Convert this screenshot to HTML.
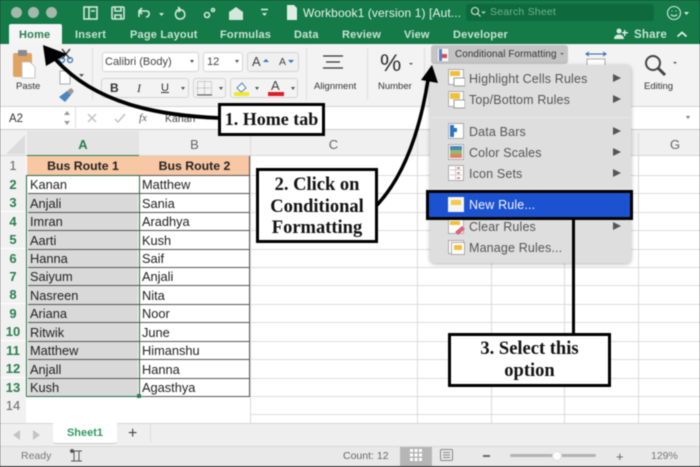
<!DOCTYPE html>
<html><head><meta charset="utf-8">
<style>
html,body{margin:0;padding:0;width:700px;height:467px;overflow:hidden;background:#222}
#p{position:absolute;left:0;top:0;width:700px;height:467px;overflow:hidden;background:#fff;font-family:"Liberation Sans",sans-serif;filter:blur(.45px)}
#p div{position:absolute;white-space:nowrap}
.tab{top:26px;height:18px;line-height:18px;font-size:11px;font-weight:bold;color:#c9e3d3;letter-spacing:.2px}
.rh{left:0;width:26px;height:18px;line-height:19px;text-align:center;font-size:13px;font-weight:bold;color:#2a7d4f;background:#f1f1f1}
.cell{height:18px;line-height:20px;color:#222;font-family:"Liberation Sans",sans-serif;font-size:12.8px}
.gh{left:250px;width:450px;height:1px;background:#dcdcdc}
.gv{top:133px;width:1px;height:290px;background:#d9d9d9}
.box{box-sizing:border-box;border:3px solid #000;background:#fff;text-align:center;font-family:"Liberation Serif",serif;font-weight:bold;font-size:18.500px;color:#111;line-height:22px}
.mi{left:469px;font-size:12.5px;color:#555;height:16px;line-height:16px;letter-spacing:.15px}
.ar{left:613px;width:0;height:0;border-left:8px solid #555;border-top:4.5px solid transparent;border-bottom:4.5px solid transparent}
.rb{font-size:9.5px;color:#333}
.btn{background:#fff;border:1px solid #d5d5d5;border-radius:3px;box-sizing:border-box}
</style></head><body><div id="p">

<!-- title bar -->
<div style="left:0;top:0;width:700px;height:44px;background:#137a48"></div>
<div style="left:11px;top:7px;width:11px;height:11px;border-radius:50%;background:#a4b8ac"></div>
<div style="left:28px;top:7px;width:11px;height:11px;border-radius:50%;background:#a4b8ac"></div>
<div style="left:46px;top:7px;width:11px;height:11px;border-radius:50%;background:#a4b8ac"></div>
<svg style="position:absolute;left:80px;top:3px" width="190" height="20" fill="none" stroke="#d3e8da" stroke-width="1.6">
<rect x="4" y="4" width="13" height="12"/><path d="M9 4v12M11 8h4"/>
<rect x="32" y="4" width="12" height="12" rx="1"/><path d="M35 4v4h6V4M35 16v-4h6v4"/>
<path d="M59 14v-6h8M59 8l3-3M59 8l3 3M67 8c3 0 3 6-1 6"/><path d="M79 10h5l-2.500 3z" fill="#d3e8da" stroke="none"/>
<path d="M100 6c-6 1-6 10 0 10s6-7 2-9M98 4l3 3-3 2"/>
<circle cx="127" cy="12" r="2.500"/><circle cx="133" cy="7" r="1.500"/>
<path d="M149 9l7-5 7 5v8h-14z" fill="#d3e8da" stroke="none"/>
<path d="M182 10h5l-2.500 3z" fill="#d3e8da" stroke="none" />
<path d="M181 6.500h7" />
</svg>
<svg style="position:absolute;left:286px;top:5px" width="12" height="15"><path d="M1 0h7l3 3v12H1z" fill="#dfeee5"/></svg>
<div style="left:303px;top:5px;font-size:12px;line-height:16px;color:#e8f3ec;letter-spacing:.1px">Workbook1 (version 1) [Aut...</div>
<div style="left:466px;top:4px;width:188px;height:17px;background:#0e6a3d;border-radius:3px"></div>
<svg style="position:absolute;left:470px;top:6px" width="18" height="13" fill="none" stroke="#d5e8dc" stroke-width="1.100"><circle cx="5" cy="5" r="3.500"/><path d="M7.500 7.500l3 3M12 5.500l1.500 1.500 1.500-1.500"/></svg>
<div style="left:490px;top:5px;font-size:10.500px;line-height:15px;color:#6fb18e;letter-spacing:.2px">Search Sheet</div>
<svg style="position:absolute;left:666px;top:5px" width="24" height="16" fill="none" stroke="#d8eade" stroke-width="1.100"><circle cx="8" cy="8" r="6.500"/><path d="M5 9.500c1.500 2 4.500 2 6 0M5.500 6h1M9.500 6h1"/><path d="M18 7h5l-2.500 3z" fill="#d8eade" stroke="none"/></svg>

<div style="left:9px;top:24px;width:53px;height:21px;background:#f5f5f5;border-radius:2px 2px 0 0"></div>
<div class="tab" style="left:19px;color:#2c7d52">Home</div>
<div class="tab" style="left:75px">Insert</div>
<div class="tab" style="left:130px">Page Layout</div>
<div class="tab" style="left:220px">Formulas</div>
<div class="tab" style="left:294px">Data</div>
<div class="tab" style="left:342px">Review</div>
<div class="tab" style="left:404px">View</div>
<div class="tab" style="left:453px">Developer</div>
<svg style="position:absolute;left:614px;top:28px" width="14" height="12" fill="#d8eade"><circle cx="5" cy="3" r="2.500"/><path d="M0 11c0-6 10-6 10 0z"/><path d="M10 2h1.500v2H14v1.500h-2.500V8H10V5.500H8V4h2z"/></svg>
<div class="tab" style="left:634px;font-size:11.500px">Share</div>
<svg style="position:absolute;left:676px;top:30px" width="12" height="8" fill="none" stroke="#e3f0e8" stroke-width="1.800"><path d="M1.500 6.500l4.500-4 4.500 4"/></svg>

<!-- ribbon -->
<div style="left:0;top:44px;width:700px;height:62px;background:#f3f3f3;border-bottom:1px solid #d5d5d5"></div>
<svg style="position:absolute;left:11px;top:49px" width="26" height="30"><rect x="2" y="4" width="19" height="24" rx="2" fill="#e0a462"/><rect x="7" y="1" width="9" height="6" rx="1" fill="#8b8b8b"/><path d="M11 13h8l5 5v11H11z" fill="#fff" stroke="#bbb" stroke-width=".8"/></svg>
<div class="rb" style="left:16px;top:81px;line-height:12px">Paste</div>
<svg style="position:absolute;left:56px;top:47px" width="30" height="62" fill="none"><path d="M6 2l8 10M14 2l-8 10" stroke="#333" stroke-width="1.400"/><circle cx="6" cy="13" r="2.500" stroke="#3b78b8" stroke-width="1.300"/><circle cx="14" cy="13" r="2.500" stroke="#3b78b8" stroke-width="1.300"/><path d="M4 24h7l3 3v10H4z" fill="#fff" stroke="#aaa"/><path d="M23 27h5l-2.500 3z" fill="#555"/><path d="M3 50l8-6 4 4-6 7z" fill="#4d86bd"/><path d="M11 44l4-3 3 3-3 4z" fill="#999"/></svg>
<div style="left:92px;top:48px;width:1px;height:52px;background:#dedede"></div>
<div class="btn" style="left:102px;top:52px;width:97px;height:20px"></div>
<div class="rb" style="left:105px;top:55px;font-size:11px;line-height:14px;color:#444">Calibri (Body)</div>
<div style="left:190px;top:60px;border-left:2.500px solid transparent;border-right:2.500px solid transparent;border-top:3px solid #555"></div>
<div class="btn" style="left:203px;top:52px;width:40px;height:20px"></div>
<div class="rb" style="left:207px;top:55px;font-size:11px;line-height:14px;color:#444">12</div>
<div style="left:235px;top:60px;border-left:2.500px solid transparent;border-right:2.500px solid transparent;border-top:3px solid #555"></div>
<div class="btn" style="left:247px;top:52px;width:52px;height:20px;background:#f0f0f0"></div>
<div style="left:252px;top:53px;font-size:13px;line-height:18px;color:#444">A</div>
<div style="left:263px;top:59px;border-left:3px solid transparent;border-right:3px solid transparent;border-bottom:3.500px solid #2b74c0"></div>
<div style="left:279px;top:55px;font-size:10.500px;line-height:15px;color:#444">A</div>
<div style="left:288px;top:60px;border-left:3px solid transparent;border-right:3px solid transparent;border-top:3.500px solid #2b74c0"></div>
<div class="btn" style="left:101px;top:78px;width:88px;height:20px;background:#f3f3f3"></div>
<div class="rb" style="left:110px;top:81px;font-size:12px;font-weight:bold;line-height:14px">B</div>
<div class="rb" style="left:137px;top:81px;font-size:12px;font-style:italic;line-height:14px;font-family:'Liberation Serif',serif">I</div>
<div class="rb" style="left:161px;top:81px;font-size:11px;text-decoration:underline;line-height:14px">U</div>
<div style="left:181px;top:87px;border-left:2.500px solid transparent;border-right:2.500px solid transparent;border-top:3px solid #555"></div>
<div class="btn" style="left:193px;top:78px;width:33px;height:20px;background:#f3f3f3"></div>
<svg style="position:absolute;left:197px;top:81px" width="16" height="15" fill="none" stroke="#aaa" stroke-dasharray="1 1"><rect x=".5" y=".5" width="14" height="13"/><path d="M7.500 0v14M0 7h15"/><path d="M0 14h15" stroke="#555" stroke-dasharray="none"/></svg>
<div style="left:219px;top:87px;border-left:2.500px solid transparent;border-right:2.500px solid transparent;border-top:3px solid #555"></div>
<div class="btn" style="left:230px;top:78px;width:68px;height:20px;background:#f3f3f3"></div>
<svg style="position:absolute;left:234px;top:80px" width="16" height="17"><path d="M3 8l5-5 4 5-5 4z" fill="#fff" stroke="#4a80b8"/><rect y="12" width="15" height="4" fill="#f1e62f"/></svg>
<div style="left:255px;top:87px;border-left:2.500px solid transparent;border-right:2.500px solid transparent;border-top:3px solid #555"></div>
<div style="left:271px;top:78px;font-size:13px;line-height:15px;color:#444">A</div>
<div style="left:268px;top:92px;width:16px;height:4px;background:#de1c24"></div>
<div style="left:291px;top:87px;border-left:2.500px solid transparent;border-right:2.500px solid transparent;border-top:3px solid #555"></div>
<div style="left:306px;top:48px;width:1px;height:52px;background:#dedede"></div>
<svg style="position:absolute;left:320px;top:53px" width="26" height="22" stroke="#333" stroke-width="1.200"><path d="M3 3h20M6 9h14M3 15h20"/></svg>
<div class="rb" style="left:314px;top:81px;line-height:12px">Alignment</div>
<div style="left:367px;top:48px;width:1px;height:52px;background:#dedede"></div>
<div style="left:380px;top:50px;font-size:24px;line-height:28px;color:#333">%</div>
<div style="left:409px;top:63px;border-left:2px solid transparent;border-right:2px solid transparent;border-top:2.500px solid #555"></div>
<div class="rb" style="left:378px;top:81px;line-height:12px">Number</div>
<div style="left:424px;top:48px;width:1px;height:52px;background:#dedede"></div>

<!-- CF button -->
<div style="left:431px;top:45px;width:137px;height:19px;background:#c4c4c4;border-radius:3px"></div>
<svg style="position:absolute;left:437px;top:48px" width="12" height="14"><rect width="12" height="14" fill="#f4f4f4" stroke="#aaa"/><rect x="2" y="1" width="3" height="12" fill="#5b84c4"/><rect x="5" y="6" width="5" height="4" fill="#d64a5a"/></svg>
<div style="left:455px;top:47px;font-size:9.900px;line-height:15px;color:#333;letter-spacing:.1px">Conditional Formatting</div>
<div style="left:560px;top:53px;border-left:2px solid transparent;border-right:2px solid transparent;border-top:2.500px solid #666"></div>
<svg style="position:absolute;left:584px;top:50px" width="34" height="20"><path d="M2 4h20M5 2L2 4l3 2M19 2l3 2-3 2" stroke="#2b63ad" fill="none"/><rect x="3" y="9" width="18" height="14" fill="#fff" stroke="#aaa"/><path d="M5 16h8" stroke="#2b63ad" stroke-width="1.500"/></svg>
<svg style="position:absolute;left:642px;top:52px" width="30" height="26" fill="none" stroke="#444"><circle cx="11" cy="11" r="7" stroke-width="2"/><path d="M16 16l7 7" stroke-width="3"/></svg>
<div style="left:673px;top:62px;border-left:2px solid transparent;border-right:2px solid transparent;border-top:2.500px solid #555"></div>
<div class="rb" style="left:644px;top:81px;line-height:12px">Editing</div>

<!-- formula bar -->
<div style="left:0;top:107px;width:700px;height:22px;background:#fff;border-bottom:1px solid #ccc"></div>
<div style="left:9px;top:112px;font-size:11.500px;line-height:14px;color:#333">A2</div>
<div style="left:64px;top:111px;border-left:3px solid transparent;border-right:3px solid transparent;border-bottom:4px solid #999"></div>
<div style="left:64px;top:121px;border-left:3px solid transparent;border-right:3px solid transparent;border-top:4px solid #999"></div>
<div style="left:75px;top:107px;width:1px;height:21px;background:#ddd"></div>
<svg style="position:absolute;left:86px;top:112px" width="40" height="12" fill="none" stroke="#c2c2c2" stroke-width="1.500"><path d="M2 2l8 8M10 2l-8 8M29 7l3 3 7-8"/></svg>
<div style="left:139px;top:111px;font-size:11px;font-style:italic;line-height:14px;color:#555;font-family:'Liberation Serif',serif">fx</div>
<div style="left:165px;top:112px;font-size:10.500px;line-height:14px;color:#444">Kanan</div>
<div style="left:686px;top:116px;border-left:2.500px solid transparent;border-right:2.500px solid transparent;border-top:3.500px solid #777"></div>

<!-- grid header -->
<div style="left:0;top:130px;width:700px;height:26px;background:#f0f0f0;border-bottom:1px solid #d8d8d8;box-sizing:border-box"></div>
<svg style="position:absolute;left:5px;top:134px" width="22" height="22"><path d="M20 1v19H1z" fill="#dcdcdc"/></svg>
<div style="left:27px;top:131px;width:112px;height:25px;background:#e4e4e4;border-bottom:1px solid #2a7d4f;box-sizing:border-box;text-align:center;line-height:27px;font-size:13px;font-weight:bold;color:#2a7d4f">A</div>
<div style="left:139px;top:131px;width:111px;height:25px;text-align:center;line-height:27px;font-size:13px;color:#666">B</div>
<div style="left:250px;top:131px;width:167px;height:25px;text-align:center;line-height:27px;font-size:13px;color:#666">C</div>
<div style="left:638px;top:131px;width:74px;height:25px;text-align:center;line-height:27px;font-size:13px;color:#666">G</div>

<!-- gridlines -->
<div class="gv" style="left:250px"></div><div class="gv" style="left:417px"></div><div class="gv" style="left:491px"></div><div class="gv" style="left:564px"></div><div class="gv" style="left:638px"></div>
<div class="gh" style="top:175px"></div><div class="gh" style="top:193px"></div><div class="gh" style="top:212px"></div><div class="gh" style="top:230px"></div><div class="gh" style="top:249px"></div><div class="gh" style="top:267px"></div><div class="gh" style="top:285px"></div><div class="gh" style="top:304px"></div><div class="gh" style="top:322px"></div><div class="gh" style="top:341px"></div><div class="gh" style="top:359px"></div><div class="gh" style="top:378px"></div><div class="gh" style="top:396px"></div><div class="gh" style="top:414px"></div>

<!-- row headers -->
<div class="rh" style="top:156px;height:19px;font-weight:normal;color:#666">1</div>
<div class="rh" style="top:175px">2</div><div class="rh" style="top:193px">3</div><div class="rh" style="top:212px">4</div><div class="rh" style="top:230px">5</div><div class="rh" style="top:249px">6</div><div class="rh" style="top:267px">7</div><div class="rh" style="top:285px">8</div><div class="rh" style="top:304px">9</div><div class="rh" style="top:322px">10</div><div class="rh" style="top:341px">11</div><div class="rh" style="top:359px">12</div><div class="rh" style="top:378px">13</div>
<div class="rh" style="top:396px;font-weight:normal;color:#666">14</div>
<div class="rh" style="top:414px;height:9px;font-weight:normal;color:#666"></div>

<!-- table -->
<div style="left:27px;top:156px;width:223px;height:19px;background:#f8c7a4;text-align:center"></div>
<div style="left:27px;top:157px;width:112px;height:18px;line-height:19px;text-align:center;font-size:12.300px;font-weight:bold;color:#222">Bus Route 1</div>
<div style="left:139px;top:157px;width:111px;height:18px;line-height:19px;text-align:center;font-size:12.300px;font-weight:bold;color:#222">Bus Route 2</div>
<div style="left:28px;top:193px;width:110px;height:203px;background:#d9d9d9"></div>
<div style="left:27px;top:175px;width:223px;height:1px;background:#555"></div>
<div style="left:139px;top:175px;width:1px;height:222px;background:#555"></div>
<div style="left:249px;top:156px;width:1px;height:241px;background:#555"></div>
<div style="left:28px;top:193px;width:222px;height:1px;background:#555"></div><div style="left:28px;top:212px;width:222px;height:1px;background:#555"></div><div style="left:28px;top:230px;width:222px;height:1px;background:#555"></div><div style="left:28px;top:249px;width:222px;height:1px;background:#555"></div><div style="left:28px;top:267px;width:222px;height:1px;background:#555"></div><div style="left:28px;top:285px;width:222px;height:1px;background:#555"></div><div style="left:28px;top:304px;width:222px;height:1px;background:#555"></div><div style="left:28px;top:322px;width:222px;height:1px;background:#555"></div><div style="left:28px;top:341px;width:222px;height:1px;background:#555"></div><div style="left:28px;top:359px;width:222px;height:1px;background:#555"></div><div style="left:28px;top:378px;width:222px;height:1px;background:#555"></div><div style="left:139px;top:396px;width:111px;height:1px;background:#555"></div>
<div style="left:26px;top:175px;width:114px;height:222px;border:1px solid #2a6b46;box-sizing:border-box"></div>
<div style="left:137px;top:394px;width:4px;height:4px;background:#2a7d4f"></div>

<div class="cell" style="left:30px;top:175px">Kanan</div><div class="cell" style="left:142px;top:175px">Matthew</div>
<div class="cell" style="left:30px;top:194px">Anjali</div><div class="cell" style="left:142px;top:194px">Sania</div>
<div class="cell" style="left:30px;top:212px">Imran</div><div class="cell" style="left:142px;top:212px">Aradhya</div>
<div class="cell" style="left:30px;top:231px">Aarti</div><div class="cell" style="left:142px;top:231px">Kush</div>
<div class="cell" style="left:30px;top:249px">Hanna</div><div class="cell" style="left:142px;top:249px">Saif</div>
<div class="cell" style="left:30px;top:267px">Saiyum</div><div class="cell" style="left:142px;top:267px">Anjali</div>
<div class="cell" style="left:30px;top:286px">Nasreen</div><div class="cell" style="left:142px;top:286px">Nita</div>
<div class="cell" style="left:30px;top:304px">Ariana</div><div class="cell" style="left:142px;top:304px">Noor</div>
<div class="cell" style="left:30px;top:323px">Ritwik</div><div class="cell" style="left:142px;top:323px">June</div>
<div class="cell" style="left:30px;top:341px">Matthew</div><div class="cell" style="left:142px;top:341px">Himanshu</div>
<div class="cell" style="left:30px;top:360px">Anjall</div><div class="cell" style="left:142px;top:360px">Hanna</div>
<div class="cell" style="left:30px;top:378px">Kush</div><div class="cell" style="left:142px;top:378px">Agasthya</div>

<!-- tab bar -->
<div style="left:0;top:423px;width:700px;height:23px;background:#efefef;border-top:1px solid #d5d5d5;box-sizing:border-box"></div>
<div style="left:13px;top:430px;border-right:7px solid #c4c4c4;border-top:5px solid transparent;border-bottom:5px solid transparent"></div>
<div style="left:33px;top:430px;border-left:7px solid #c4c4c4;border-top:5px solid transparent;border-bottom:5px solid transparent"></div>
<div style="left:53px;top:423px;width:64px;height:20px;background:#fff;border-bottom:1px solid #ccc;border-radius:0 0 3px 3px;text-align:center;line-height:21px;font-size:11px;font-weight:bold;color:#2f9a63">Sheet1</div>
<div style="left:128px;top:424px;font-size:16px;line-height:20px;color:#444">+</div>
<div style="left:150px;top:424px;width:1px;height:18px;background:#dcdcdc"></div>

<!-- status -->
<div style="left:0;top:446px;width:700px;height:20px;background:#e9e9e9;border-top:1px solid #d8d8d8;box-sizing:border-box"></div>
<div style="left:0;top:466px;width:700px;height:1px;background:#555"></div>
<div style="left:21px;top:449px;font-size:10.500px;line-height:14px;color:#777">Ready</div>
<svg style="position:absolute;left:70px;top:449px" width="15" height="14" fill="none" stroke="#555"><path d="M1 2h11M4 2v10M9 2v10M1 12h11"/><circle cx="2" cy="2" r="1.500" fill="#555"/></svg>
<div style="left:343px;top:449px;font-size:10.500px;line-height:14px;color:#666">Count: 12</div>
<div style="left:400px;top:447px;width:32px;height:19px;background:#b5b5b5"></div>
<svg style="position:absolute;left:410px;top:449px" width="12" height="12" fill="#fff"><path d="M0 0h3v3H0zM4.500 0h3v3h-3zM9 0h3v3H9zM0 4.500h3v3H0zM4.500 4.500h3v3h-3zM9 4.500h3v3H9zM0 9h3v3H0zM4.500 9h3v3h-3zM9 9h3v3H9z"/></svg>
<svg style="position:absolute;left:440px;top:449px" width="14" height="13" fill="none" stroke="#888"><rect x=".5" y=".5" width="12" height="11" rx="1"/><path d="M3 3.500h7M3 6h7M3 8.500h7"/></svg>
<div style="left:483px;top:455px;width:7px;height:2px;background:#666"></div>
<div style="left:510px;top:454px;width:86px;height:3px;background:#b3b3b3;border-radius:2px"></div>
<div style="left:552px;top:451px;width:10px;height:10px;border-radius:50%;background:#fbfbfb;border:1px solid #ddd;box-sizing:border-box"></div>
<div style="left:616px;top:449px;font-size:13px;line-height:15px;color:#666">+</div>
<div style="left:651px;top:449px;font-size:10.500px;line-height:14px;color:#777">129%</div>

<!-- menu -->
<div style="left:430px;top:65px;width:201px;height:198px;background:#dedede;border-radius:5px;box-shadow:0 1px 4px rgba(0,0,0,.3)"></div>
<div style="left:431px;top:117px;width:199px;height:1px;background:#e9e9e9"></div>
<div style="left:431px;top:188px;width:199px;height:1px;background:#e9e9e9"></div>

<svg style="position:absolute;left:448px;top:69px" width="17" height="18"><rect x=".5" y=".5" width="15" height="15" fill="#fff" stroke="#aaa"/><rect x="2" y="2" width="10" height="5" fill="#f2bf3c"/><rect x="6" y="9" width="11" height="8" fill="#fff" stroke="#999"/></svg>
<div class="mi" style="top:71px">Highlight Cells Rules</div><div class="ar" style="top:74px"></div>
<svg style="position:absolute;left:448px;top:91px" width="17" height="18"><rect x=".5" y=".5" width="15" height="15" fill="#fff" stroke="#aaa"/><rect x="2" y="2" width="10" height="6" fill="#f2bf3c"/><rect x="6" y="9" width="11" height="8" fill="#fff" stroke="#999"/></svg>
<div class="mi" style="top:92px">Top/Bottom Rules</div><div class="ar" style="top:95px"></div>
<svg style="position:absolute;left:448px;top:123px" width="16" height="16"><rect x=".5" y=".5" width="15" height="15" fill="#fff" stroke="#aaa"/><rect x="2" y="2" width="4" height="12" fill="#2b74c0"/><rect x="6" y="5" width="3" height="4" fill="#2b74c0"/></svg>
<div class="mi" style="top:124px">Data Bars</div><div class="ar" style="top:127px"></div>
<svg style="position:absolute;left:448px;top:144px" width="16" height="16"><rect x=".5" y=".5" width="15" height="15" fill="#fff" stroke="#aaa"/><rect x="2" y="2" width="12" height="4" fill="#4a86b8"/><rect x="2" y="6" width="12" height="4" fill="#8fbf6a"/><rect x="2" y="10" width="12" height="4" fill="#e0806a"/></svg>
<div class="mi" style="top:145px">Color Scales</div><div class="ar" style="top:148px"></div>
<svg style="position:absolute;left:448px;top:165px" width="16" height="16"><rect x=".5" y=".5" width="15" height="15" fill="#fff" stroke="#aaa"/><path d="M7.500 0v16M2 5h12M2 10h12" stroke="#ccc"/><path d="M9 3h3M9 8h3M9 13h3" stroke="#d8705e" stroke-width="1.500"/></svg>
<div class="mi" style="top:166px">Icon Sets</div><div class="ar" style="top:169px"></div>

<svg style="position:absolute;left:448px;top:219px" width="18" height="17"><rect x=".5" y=".5" width="15" height="14" fill="#fff" stroke="#aaa"/><rect x="2" y="2" width="10" height="4" fill="#f2bf3c"/><path d="M7 13l7-6 3 3-7 6z" fill="#e0607a"/></svg>
<div class="mi" style="top:219px">Clear Rules</div><div class="ar" style="top:222px"></div>
<svg style="position:absolute;left:448px;top:240px" width="17" height="16"><rect x=".5" y=".5" width="15" height="13" fill="#fff" stroke="#aaa"/><rect x="3.500" y="2.500" width="13" height="12" fill="#fff" stroke="#aaa"/><rect x="6" y="5" width="8" height="5" fill="#f2bf3c"/></svg>
<div class="mi" style="top:240px">Manage Rules...</div>

<!-- New rule highlight -->
<div style="left:426px;top:190px;width:207px;height:30px;box-sizing:border-box;border:3px solid #000;background:#1c52d0"></div>
<svg style="position:absolute;left:448px;top:197px" width="16" height="15"><rect width="16" height="15" fill="#f4f4f4"/><rect x="3" y="3" width="10" height="5" fill="#f2c94a"/></svg>
<div class="mi" style="top:197px;color:#f2f5ff">New Rule...</div>

<!-- connector / arrows -->
<div style="left:572px;top:220px;width:3px;height:114px;background:#000"></div>
<svg style="position:absolute;left:0;top:0" width="700" height="467" fill="none">
<path d="M220 118C170 116 100 108 56 60" stroke="#000" stroke-width="3.800"/>
<path d="M43 45L67 54 46 66z" fill="#000"/>
<path d="M377 205C405 175 420 130 428 80" stroke="#000" stroke-width="3.500"/>
<path d="M432 65L438 83 421 80z" fill="#000"/>
</svg>

<div class="box" style="left:218px;top:103px;width:107px;height:33px;line-height:27px;font-size:18px">1. Home tab</div>
<div class="box" style="left:256px;top:168px;width:122px;height:75px;line-height:21.500px;padding-top:4px">2. Click on<br>Conditional<br>Formatting</div>
<div class="box" style="left:448px;top:333px;width:163px;height:54px;line-height:21.500px;padding-top:3px">3. Select this<br>option</div>

</div></body></html>
